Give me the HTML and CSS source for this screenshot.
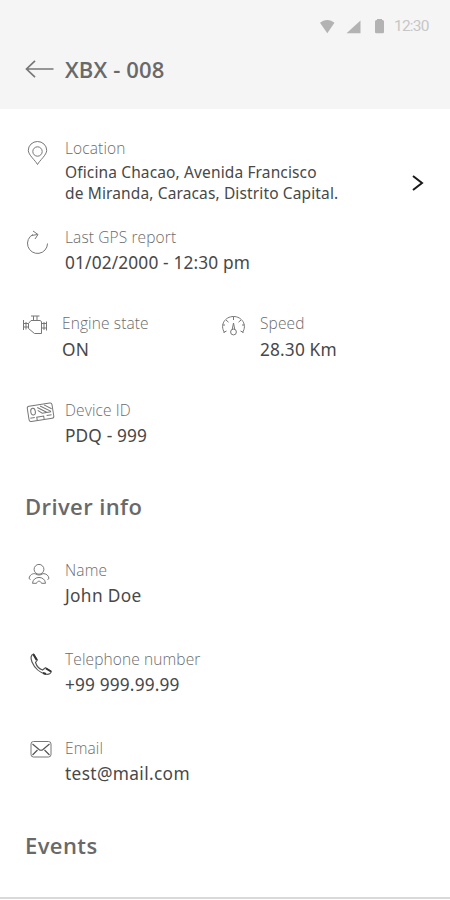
FILE: index.html
```html
<!DOCTYPE html>
<html lang="en">
<head>
<meta charset="utf-8">
<title>XBX - 008</title>
<link rel="stylesheet" href="styles.css">
</head>
<body>
<header class="header">
  <div class="status">
    <svg class="status-icons" viewBox="0 0 70 18"><path d="M0 3.8C4-.1 10.500-.1 14.500 3.800L7.300 14.200Z"/><path d="M26.500 14.200L40.500 1.500V14.200Z"/><path d="M55 2.500Q55 1 56.500 1H57V0H62V1H62.500Q64 1 64 2.500V13Q64 14.200 62.800 14.200H56.200Q55 14.200 55 13Z"/></svg>
    <span class="time">12:30</span>
  </div>
  <div class="title-row">
    <svg class="back" viewBox="0 0 30 20"><path d="M28.500 10H2M10 1.800L1.500 10L10 18.200"/></svg>
    <h1 class="title">XBX - 008</h1>
  </div>
</header>
<main class="content">
  <section class="item location">
    <svg class="icon" viewBox="0 0 40 36"><path d="M17.500 26.500C15.500 22.500 8.300 17 8.300 12.300A9.200 8.800 0 0 1 26.700 12.300C26.700 17 19.500 22.500 17.500 26.500Z"/><circle cx="17.500" cy="13.500" r="4.700"/></svg>
    <div class="text"><div class="label">Location</div><div class="address"><div>Oficina Chacao, Avenida Francisco</div><div>de Miranda, Caracas, Distrito Capital.</div></div></div>
    <svg class="chevron" viewBox="0 0 14 18"><path d="M2 2L11 9L2 16"/></svg>
  </section>
  <section class="item gps">
    <svg class="icon" viewBox="0 0 40 36"><path d="M13 7.500A10 10 0 1 0 27.500 16.500M13 4L18 7.500L15 12M17.500 7.500L11.500 8.500"/></svg>
    <div class="text"><div class="label">Last GPS report</div><div class="value">01/02/2000 - 12:30 pm</div></div>
  </section>
  <div class="pair">
    <section class="item engine">
      <svg class="icon" viewBox="0 0 40 36"><path d="M8.500 10.500L11 7.500H20L21.500 8.500V20.500H14.500L8.500 15.500ZM11 3H19.500M13.500 3V7.500M17 3V7.500M3.500 7V17M8.500 10.500H3.500M8.500 14H3.500M6 9V16.500M21.500 10.500H26.500M21.500 15H26.500M24 9V17M26.500 8.500V17.500"/></svg>
      <div class="text"><div class="label">Engine state</div><div class="value">ON</div></div>
    </section>
    <section class="item speed">
      <svg class="icon" viewBox="0 0 40 36"><path d="M4.500 19.500C-.5 12 5 3.500 13.500 3.500C22 3.500 27.500 12 22.500 19.500M3.500 19.500L6.500 18M20.500 18L23.500 19.500M13.500 3.500V7M6 7L8.500 9.200M21 7L18.500 9.200M2.500 12H5M24.500 12H22M13.500 10L12.200 16.500M13.500 10L14.800 16.500"/><circle cx="13.500" cy="19" r="2.900"/></svg>
      <div class="text"><div class="label">Speed</div><div class="value">28.30 Km</div></div>
    </section>
  </div>
  <section class="item device">
    <svg class="icon" viewBox="0 0 40 36"><g transform="rotate(-9 20.500 12)"><rect x="8" y="4.500" width="25" height="15.500" rx="2"/><ellipse cx="13.200" cy="10.500" rx="2.300" ry="3.400"/><path d="M18 7L27 13.500M21 6L31 13M25 5.500L32 10.500M18 10L22 13.500H31M9.500 16.500H14M16 19.500V16.500H23V19.500M26 16.500H31"/></g></svg>
    <div class="text"><div class="label">Device ID</div><div class="value">PDQ - 999</div></div>
  </section>
  <h2 class="heading driver">Driver info</h2>
  <section class="item name">
    <svg class="icon" viewBox="0 0 40 36"><circle cx="19" cy="9.300" r="4.900"/><path d="M9 18.500C10 14 13 13.600 15 13.600C17.500 15.500 20.500 15.500 23 13.600C26 13.600 28.500 15 29 18.500M12.500 23.300C13 15.500 25 15.500 25.500 23.300H21.500C20.500 20.500 17.500 20.500 16.500 23.300ZM9 18.500L10.500 19.500M29 18.500L27.500 19.500"/></svg>
    <div class="text"><div class="label">Name</div><div class="value wide">John Doe</div></div>
  </section>
  <section class="item phone">
    <svg class="icon dark" viewBox="0 0 40 36"><path d="M13.500 5C10.500 6 10.500 9.500 12 13C14.500 19 20 24 26 25.200C29 25.700 31 24.500 31.300 22.500L25.500 18.800L22.500 21C19.500 20 16.500 16.500 15.500 13.500L17.300 11Z"/><path class="thick" d="M13.500 5.500L16.700 11M26 19.500L31 22.500M23 24L26 25"/></svg>
    <div class="text"><div class="label">Telephone number</div><div class="value">+99 999.99.99</div></div>
  </section>
  <section class="item email">
    <svg class="icon" viewBox="0 0 40 36"><rect x="11" y="3.500" width="20" height="15.500" rx="2.500"/><path class="mid" d="M12.500 6L19 11.500Q21 13 23 11.500L29.500 6M12.500 17L17.500 12M29.500 17L24.500 12"/></svg>
    <div class="text"><div class="label">Email</div><div class="value wide">test@mail.com</div></div>
  </section>
  <h2 class="heading events">Events</h2>
</main>
</body>
</html>
```
FILE: styles.css
```css
* { box-sizing: border-box; }
body { margin: 0; width: 450px; height: 900px; overflow: hidden; background: #fff; font-family: "Noto Sans", "Open Sans", sans-serif; color: #484848; }
.header { height: 109px; background: #f5f5f5; padding-top: 14px; }
.status { display: flex; height: 24px; align-items: center; padding-left: 320px; color: #c6c6c6; }
.status-icons { width: 70px; height: 18px; margin-top: 4px; fill: #b3b3b3; }
.time { font: 15.500px/24px Roboto, sans-serif; margin-left: 4px; letter-spacing: -.8px; }
.title-row { display: flex; align-items: center; height: 32px; margin-top: 15px; padding-left: 25px; }
.back { width: 30px; height: 20px; margin: -1px 10px 0 0; fill: none; stroke: #777; stroke-width: 1.7; }
.title { margin: 0; font-family: "Open Sans", sans-serif; font-size: 22px; line-height: 32px; font-weight: 600; letter-spacing: .15px; color: #696969; }
.content { height: 790px; padding: 29px 0 0 20px; border-bottom: 2px solid #d9d9d9; }
.item { display: flex; align-items: flex-start; }
.icon { width: 40px; height: 36px; margin-right: 5px; flex: none; fill: none; stroke: #777; stroke-width: 1; }
.dark { stroke: #555; stroke-width: 1.2; }
.thick { stroke: #333; stroke-width: 2; }
.mid { stroke: #555; stroke-width: 1.2; }
.text { flex: none; white-space: nowrap; }
.label { font-family: "Open Sans", sans-serif; font-weight: 300; font-size: 15.500px; line-height: 20px; letter-spacing: .12px; color: #6c6c6c; }
.value { font-size: 17.300px; line-height: 26px; margin-top: 3px; letter-spacing: .15px; }
.wide { letter-spacing: .35px; }
.address { margin-top: 4px; font-size: 15.500px; line-height: 20.500px; letter-spacing: .13px; }
.chevron { width: 14px; height: 18px; margin: 36px 0 0 auto; fill: none; stroke: #181818; stroke-width: 2; }
.location { height: 89px; padding-right: 25px; }
.gps { height: 86px; }
.pair { display: grid; grid-template-columns: 200px 1fr; height: 87px; }
.engine .icon { margin-right: 2px; }
.speed .icon { margin-right: 0; }
.pair .value { margin-top: 4px; }
.device { height: 91px; }
.heading { margin: 0 0 0 5px; font-family: "Open Sans", sans-serif; font-size: 22px; line-height: 30px; font-weight: 600; letter-spacing: .4px; color: #696969; }
.driver { height: 69px; }
.name { height: 89px; }
.phone { height: 89px; }
.email { height: 92px; }
```
